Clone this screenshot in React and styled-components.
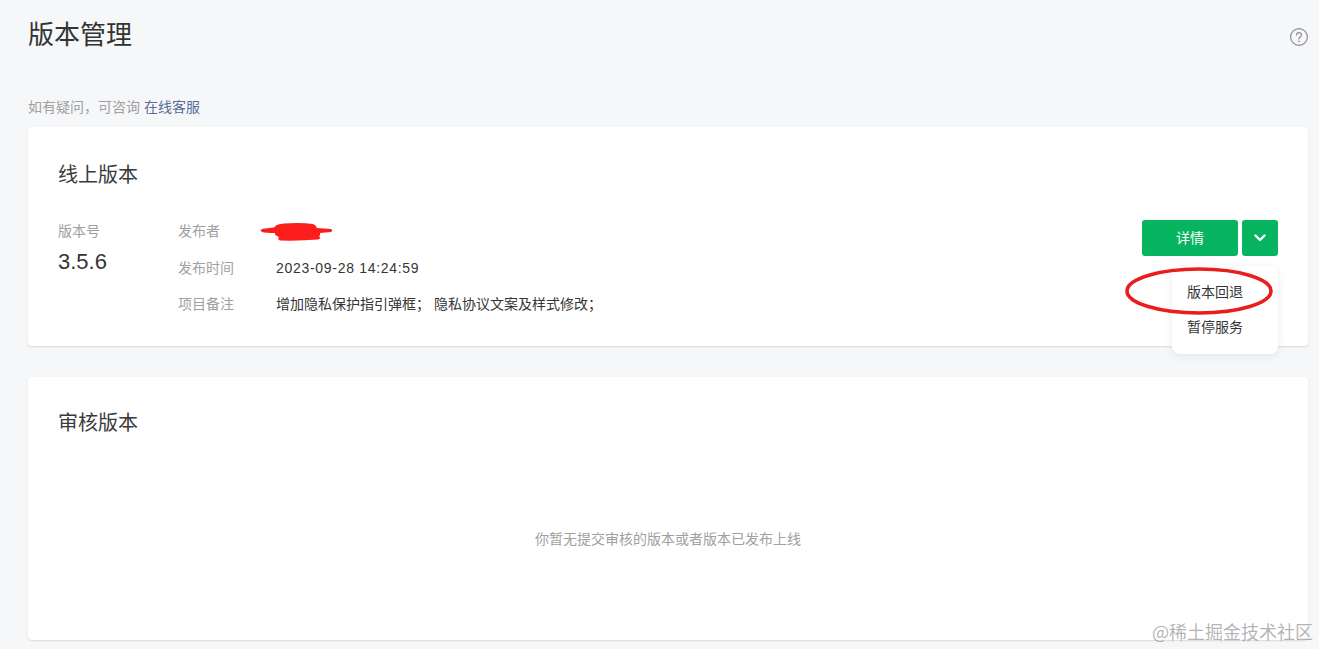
import * as React from "react";
import styled, { createGlobalStyle } from "styled-components";

const GlobalStyle = createGlobalStyle`
  html, body {
    margin: 0;
    height: 100%;
    overflow: hidden;
    background: #f6f7f9;
  }
  body {
    font-family: "Liberation Sans", "Noto Sans CJK SC", sans-serif;
  }
`;

function App() {
  return (
    <Page>
      <GlobalStyle />
      <Header>
        <Title>版本管理</Title>
        <HelpIcon width="20" height="20" viewBox="0 0 20 20" fill="none">
          <circle cx="10" cy="10" r="8.4" stroke="#8d8d8d" strokeWidth="1.2" />
          <path
            d="M7.6 8c0-1.4 1-2.3 2.4-2.3s2.4.9 2.4 2.2c0 1-.6 1.5-1.3 2-.7.5-1.1.9-1.1 1.8v.4"
            stroke="#8d8d8d"
            strokeWidth="1.2"
            strokeLinecap="round"
          />
          <circle cx="10" cy="14.4" r=".8" fill="#8d8d8d" />
        </HelpIcon>
      </Header>
      <Notice>
        如有疑问，可咨询 <NoticeLink>在线客服</NoticeLink>
      </Notice>

      <OnlineCard>
        <CardTitle>线上版本</CardTitle>
        <VersionRow>
          <VersionColumn>
            <MutedLabel>版本号</MutedLabel>
            <VersionNumber>3.5.6</VersionNumber>
          </VersionColumn>
          <InfoList>
            <InfoRow>
              <MutedLabel>发布者</MutedLabel>
              <Redaction width="74" height="20" viewBox="0 0 74 20">
                <path
                  d="M0.5 9.5 Q1 8 5 7.5 L14 6.5 Q16 3 24 2.5 Q42 1.5 53 3 Q56 4 57 7 L71 8 Q73.5 9.5 71 11 L60 12 Q61 14 59 15.5 Q62 17 58 18.5 Q40 20 20 19.5 Q17 18 19 16 Q14 14 15 12 Q6 12 2 11 Z"
                  fill="#fb1e1a"
                />
              </Redaction>
            </InfoRow>
            <InfoRow>
              <MutedLabel>发布时间</MutedLabel>
              <TimeValue>2023-09-28 14:24:59</TimeValue>
            </InfoRow>
            <InfoRow>
              <MutedLabel>项目备注</MutedLabel>
              <InfoValue>增加隐私保护指引弹框； 隐私协议文案及样式修改；</InfoValue>
            </InfoRow>
          </InfoList>
          <Actions>
            <DetailButton>详情</DetailButton>
            <ArrowButton>
              <svg width="12" height="8" viewBox="0 0 12 8" fill="none">
                <path
                  d="M1.5 1.5 6 6l4.5-4.5"
                  stroke="#fff"
                  strokeWidth="2.4"
                  strokeLinecap="round"
                  strokeLinejoin="round"
                />
              </svg>
            </ArrowButton>
            <Menu>
              <MenuItem>版本回退</MenuItem>
              <MenuItem>暂停服务</MenuItem>
            </Menu>
            <Annotation width="150" height="50" viewBox="0 0 150 50" fill="none">
              <ellipse
                cx="74"
                cy="25"
                rx="72"
                ry="22"
                stroke="#ea1c1c"
                strokeWidth="3.6"
              />
            </Annotation>
          </Actions>
        </VersionRow>
      </OnlineCard>

      <ReviewCard>
        <CardTitle>审核版本</CardTitle>
        <EmptyState>你暂无提交审核的版本或者版本已发布上线</EmptyState>
      </ReviewCard>

      <Watermark>@稀土掘金技术社区</Watermark>
    </Page>
  );
}

const Page = styled.div`
  position: relative;
  width: 1319px;
  height: 649px;
  box-sizing: border-box;
  padding: 17px 11px 0 28px;
  overflow: hidden;
  background: #f6f7f9;
`;

const Header = styled.div`
  display: flex;
  justify-content: space-between;
  align-items: center;
  height: 36px;
  margin-right: -1px;
`;

const Title = styled.h1`
  margin: 0;
  font-size: 26px;
  font-weight: 400;
  line-height: 36px;
  color: #333;
`;

const HelpIcon = styled.svg`
  display: block;
  margin-top: 4px;
`;

const Notice = styled.div`
  margin-top: 44px;
  height: 20px;
  font-size: 14px;
  line-height: 20px;
  color: #a0a0a0;
`;

const NoticeLink = styled.a`
  color: #576b95;
  cursor: pointer;
`;

const Card = styled.section`
  box-sizing: border-box;
  background: #fff;
  border-radius: 4px;
  box-shadow: 0 1px 2px rgba(0, 0, 0, 0.12);
`;

const OnlineCard = styled(Card)`
  height: 219px;
  margin-top: 10px;
  padding: 34px 30px 0;
`;

const ReviewCard = styled(Card)`
  height: 263px;
  margin-top: 31px;
  padding: 32px 30px 0;
`;

const CardTitle = styled.h2`
  margin: 0;
  font-size: 20px;
  font-weight: 400;
  line-height: 28px;
  color: #3a3a3a;
`;

const VersionRow = styled.div`
  display: flex;
  align-items: flex-start;
  margin-top: 30px;
`;

const VersionColumn = styled.div`
  display: flex;
  flex-direction: column;
  width: 120px;
`;

const MutedLabel = styled.div`
  width: 98px;
  flex-shrink: 0;
  font-size: 14px;
  line-height: 24px;
  color: #a0a0a0;
`;

const VersionNumber = styled.div`
  margin-top: 6px;
  font-size: 22px;
  line-height: 26px;
  color: #353535;
`;

const InfoList = styled.div`
  display: flex;
  flex-direction: column;
  gap: 12.5px;
  flex: 1;
`;

const InfoRow = styled.div`
  display: flex;
  align-items: center;
  height: 24px;
`;

const InfoValue = styled.div`
  font-size: 14px;
  line-height: 24px;
  color: #353535;
`;

const TimeValue = styled(InfoValue)`
  letter-spacing: 0.7px;
`;

const Redaction = styled.svg`
  display: block;
  margin-left: -16px;
`;

const Actions = styled.div`
  position: relative;
  display: flex;
  gap: 4px;
  margin-top: 1px;
`;

const ButtonBase = styled.button`
  display: flex;
  align-items: center;
  justify-content: center;
  height: 36px;
  padding: 0;
  border: 0;
  border-radius: 3px;
  background: #07b45f;
  color: #fff;
  font-family: inherit;
  font-size: 14px;
`;

const DetailButton = styled(ButtonBase)`
  width: 96px;
  padding-bottom: 2px;
`;

const ArrowButton = styled(ButtonBase)`
  width: 36px;
`;

const Menu = styled.div`
  position: absolute;
  top: 46px;
  right: 0;
  box-sizing: border-box;
  width: 106px;
  height: 88px;
  padding: 9px 15px;
  background: #fff;
  border-radius: 8px;
  box-shadow: 0 2px 10px rgba(0, 0, 0, 0.08);
`;

const MenuItem = styled.div`
  font-size: 14px;
  line-height: 35px;
  color: #353535;
`;

const Annotation = styled.svg`
  position: absolute;
  top: 46px;
  right: 3px;
  overflow: visible;
`;

const EmptyState = styled.div`
  margin-top: 90px;
  text-align: center;
  font-size: 14px;
  line-height: 24px;
  color: #a0a0a0;
`;

const Watermark = styled.div`
  position: absolute;
  right: 6px;
  bottom: 6px;
  font-size: 18px;
  line-height: 24px;
  color: rgba(130, 130, 130, 0.6);
  font-family: "Noto Sans CJK SC", sans-serif;
`;

export default App;
